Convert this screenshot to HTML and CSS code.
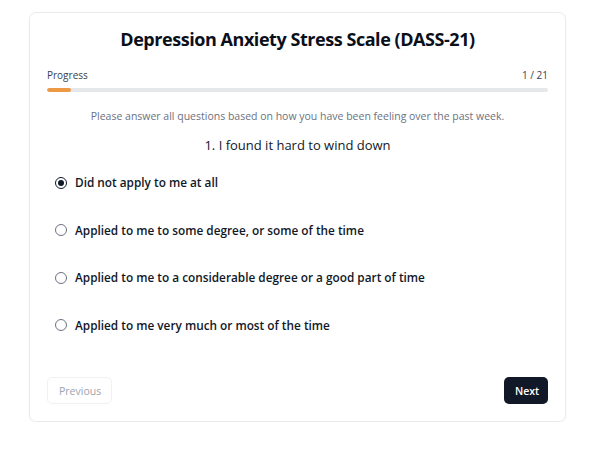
FILE: index.html
```html
<!DOCTYPE html>
<html lang="en">
<head>
<meta charset="utf-8">
<title>DASS-21</title>
<link rel="stylesheet" href="styles.css">
</head>
<body>
<div class="card">
  <h1 class="title">Depression Anxiety Stress Scale (DASS-21)</h1>
  <div class="progress-head">
    <span>Progress</span>
    <span>1 / 21</span>
  </div>
  <div class="track"><div class="fill" style="width:4.76%"></div></div>
  <p class="hint">Please answer all questions based on how you have been feeling over the past week.</p>
  <h2 class="question">1. I found it hard to wind down</h2>
  <div class="options">
    <label class="option"><span class="radio checked"></span><span>Did not apply to me at all</span></label>
    <label class="option"><span class="radio"></span><span>Applied to me to some degree, or some of the time</span></label>
    <label class="option"><span class="radio"></span><span>Applied to me to a considerable degree or a good part of time</span></label>
    <label class="option"><span class="radio"></span><span>Applied to me very much or most of the time</span></label>
  </div>
  <div class="nav">
    <button class="btn btn-prev">Previous</button>
    <button class="btn btn-next">Next</button>
  </div>
</div>
</body>
</html>
```
FILE: styles.css
```css
* { box-sizing: border-box; }
html, body { margin: 0; padding: 0; background: #fff; }
body {
  font-family: "Open Sans", "Noto Sans", sans-serif;
  color: #111827;
  padding: 12px 0 0 29px;
}
.card {
  width: 537px;
  height: 410px;
  border: 1px solid #e8eaed;
  border-radius: 7px;
  box-shadow: 0 1px 2px rgba(0,0,0,0.04);
  padding: 14px 17px 17px 17px;
  display: flex;
  flex-direction: column;
}
.title {
  margin: 0;
  font-size: 18px;
  font-weight: 700;
  text-align: center;
  line-height: 24px;
  letter-spacing: -0.45px;
  color: #0b0f1a;
}
.progress-head {
  margin-top: 17px;
  display: flex;
  justify-content: space-between;
  font-size: 10px;
  line-height: 14px;
  color: #374151;
}
.track {
  margin-top: 6px;
  height: 4px;
  background: #e5e7eb;
  border-radius: 2px;
  overflow: hidden;
}
.fill {
  height: 100%;
  background: #ee9a45;
  border-radius: 2px;
}
.hint {
  margin: 17px 0 0 0;
  text-align: center;
  font-size: 10.5px;
  line-height: 14px;
  color: #6b7280;
}
.question {
  margin: 13px 0 0 0;
  text-align: center;
  font-size: 13px;
  font-weight: 500;
  line-height: 18px;
}
.options {
  margin-top: 20px;
  display: flex;
  flex-direction: column;
  gap: 30.5px;
  padding-left: 8px;
}
.option {
  display: flex;
  align-items: center;
  gap: 8px;
  font-size: 11.8px;
  font-weight: 600;
  line-height: 17px;
  color: #111827;
}
.radio {
  width: 12px;
  height: 12px;
  border: 1px solid #6b7280;
  border-radius: 50%;
  flex: none;
  display: flex;
  align-items: center;
  justify-content: center;
}
.radio.checked { border-color: #111827; }
.radio.checked::after {
  content: "";
  width: 6px;
  height: 6px;
  border-radius: 50%;
  background: #111827;
}
.nav {
  margin-top: auto;
  display: flex;
  justify-content: space-between;
  align-items: flex-end;
}
.btn {
  font-family: inherit;
  font-size: 10.5px;
  font-weight: 600;
  height: 27px;
  border-radius: 5px;
  padding: 0 11px;
}
.btn-prev {
  background: #fff;
  color: #9ca3af;
  border: 1px solid #f0f1f3;
  width: 65px;
  font-weight: 500;
}
.btn-next {
  background: #111827;
  color: #fff;
  border: none;
  width: 44px;
}
```
